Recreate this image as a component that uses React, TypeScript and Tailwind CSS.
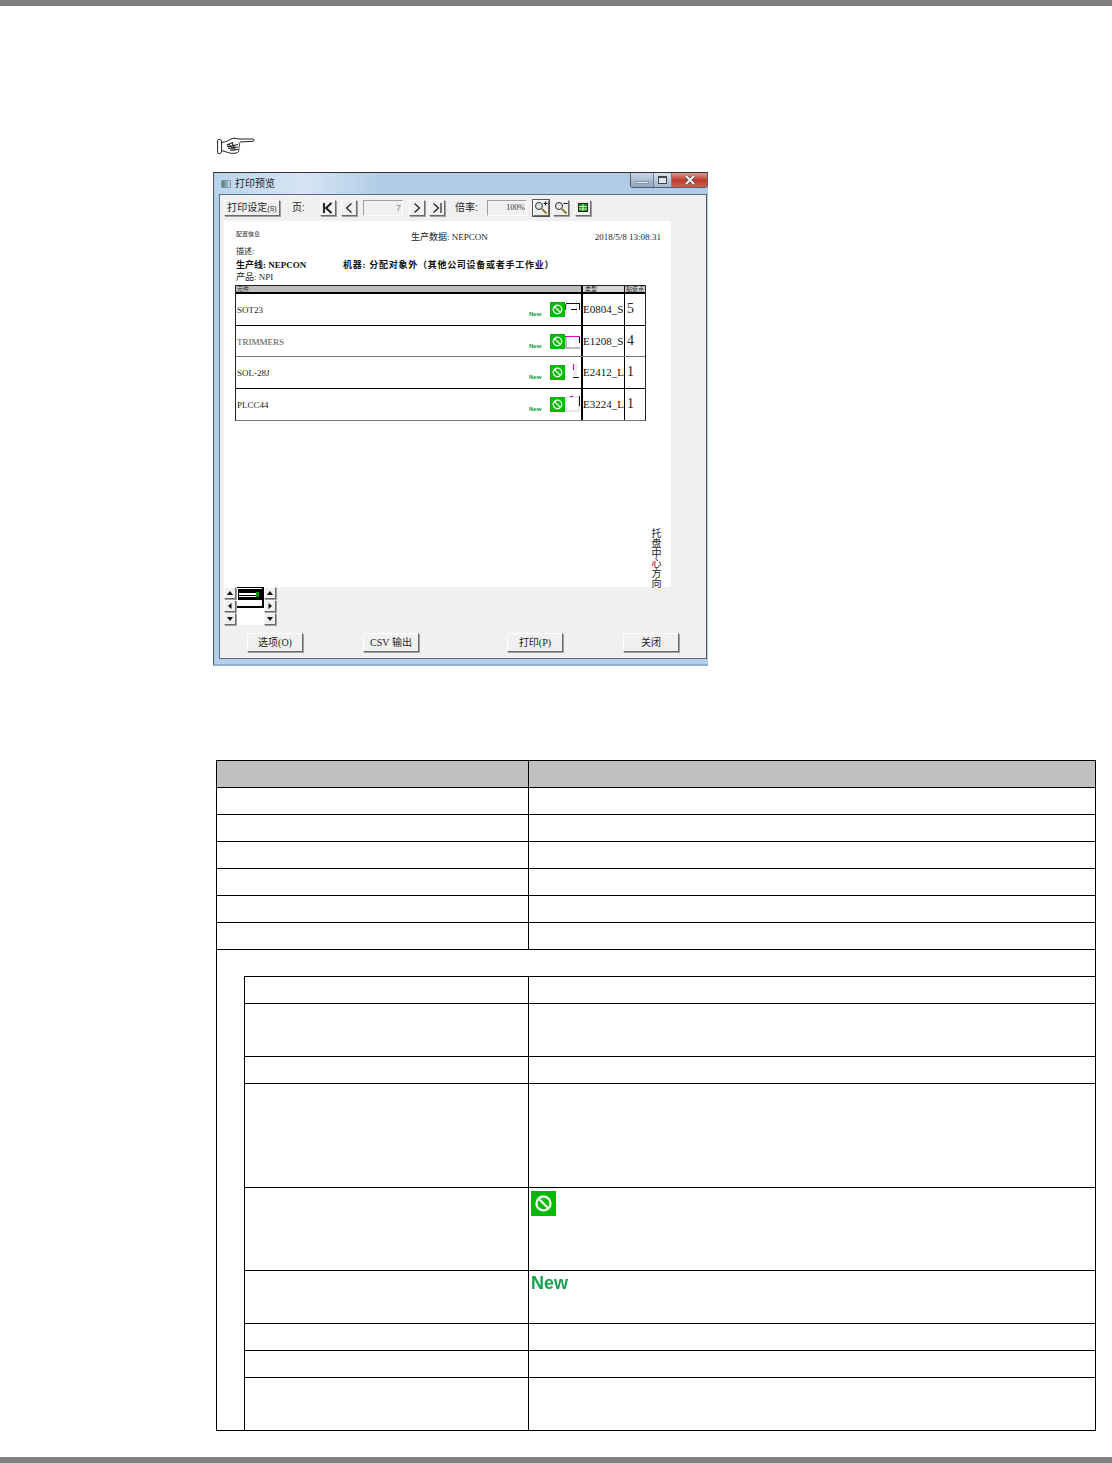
import React from "react";

const cjk = "font-['Liberation_Sans','Noto_Sans_CJK_SC',sans-serif]";
const serif = "font-['Liberation_Serif','Noto_Sans_CJK_SC',serif]";
const raised =
  "bg-[#f0f0f0] border border-t-white border-l-white border-r-[#6b6b6b] border-b-[#6b6b6b] shadow-[1px_1px_0_#a0a0a0]";

function Hand() {
  return (
    <svg width="38" height="19" viewBox="0 0 38 19" fill="none" stroke="#222" strokeWidth="1">
      <path d="M3 2.500C1 2 .6 3 .6 4v11c0 1.500 1 2 2.400 1.500C4.400 16 4.600 15 4.600 14V5c0-1.500-.4-2.300-1.600-2.500z" />
      <path d="M4.600 5.500C9 5 11 4 14 2c3-1.500 5-.5 8 0h14c1.500 0 1.600 2.200 0 2.300L23 5" />
      <path d="M4.600 13.500c3 .5 5 2 8 2.500 3 .5 6 .5 8-.5 1.500-1 1.500-2 .5-2.500 1.500-.5 1.500-2 .5-2.500 1-.5 1.500-2 .5-2.500 1-1 .5-2.500-.5-2.500" />
      <path d="M10 8c2-1.500 4-2 6-2.500M10 9c3 2 6-1 11-1.500M11 11c3 1 6-1 10-1M13 13c3 .5 5-.5 8-.5M12 7l4 5M15 6l3 6" strokeWidth="1.200" />
    </svg>
  );
}

function NavBtn({ d, thick }: { d: string; thick?: boolean }) {
  return (
    <div className={`w-[16px] h-[16px] flex items-center justify-center ${raised}`}>
      <svg width="12" height="12" viewBox="0 0 12 12" fill="none" stroke="#111" strokeWidth={thick ? 1.800 : 1.100}>
        <path d={d} />
      </svg>
    </div>
  );
}

function ZoomIcon({ sign }: { sign: "+" | "-" }) {
  return (
    <svg width="14" height="14" viewBox="0 0 14 14" fill="none">
      <circle cx="5" cy="5" r="3.500" stroke="#333" fill="#dfe8e0" />
      <path d="M8 8l4.500 4.500" stroke="#8a7a20" strokeWidth="1.800" />
      <path d={sign === "+" ? "M9.500 2.500h4M11.500 .5v4" : "M9.500 2.500h4"} stroke="#111" />
    </svg>
  );
}

function SmallBtn({ children, box }: { children: React.ReactNode; box?: boolean }) {
  return (
    <div
      className={`w-[16px] h-[16px] flex items-center justify-center ${raised} ${box ? "outline outline-1 outline-[#555]" : ""}`}
    >
      {children}
    </div>
  );
}

function DlgBtn({ children, ml }: { children: React.ReactNode; ml: string }) {
  return (
    <div
      className={`${ml} w-[56px] h-[19px] flex items-center justify-center text-[10px] leading-none text-[#222] ${serif} ${raised}`}
    >
      {children}
    </div>
  );
}

function Arrow({ dir }: { dir: "u" | "d" | "l" | "r" }) {
  const p = {
    u: "M1 6h6L4 2z",
    d: "M1 2h6L4 6z",
    l: "M5.500 1v6L2 4z",
    r: "M2.500 1v6L6 4z",
  }[dir];
  return (
    <div className={`w-[12px] h-[12px] flex items-center justify-center ${raised}`}>
      <svg width="8" height="8" viewBox="0 0 8 8">
        <path d={p} fill="#111" />
      </svg>
    </div>
  );
}

function Stop({ size }: { size: number }) {
  return (
    <svg width={size} height={size} viewBox="0 0 25 25" className="block">
      <rect width="25" height="25" fill="#00b900" />
      <circle cx="12.500" cy="12.500" r="7" fill="none" stroke="#e8f8e8" strokeWidth="2.400" />
      <path d="M7.500 7.500l10 10" stroke="#e8f8e8" strokeWidth="2.400" />
    </svg>
  );
}

const fragments: React.ReactNode[] = [
  <>
    <path d="M1.500 2v14M11.500 2v14" stroke="#e0e0ea" />
    <path d="M.5 6v6" stroke="#8a108a" />
    <path d="M1 5.500h13M6 11.500h6M14.500 5v7" stroke="#111" />
  </>,
  <>
    <path d="M1 7v11h14" stroke="#777" />
    <path d="M4 9v8M11 9v8" stroke="#e0e0ea" />
    <path d="M0 6.500h15" stroke="#d010c0" />
    <path d="M14.500 7v6" stroke="#111" />
  </>,
  <>
    <rect x="8.500" y="3" width="3.500" height="12" fill="#ebebf6" />
    <path d="M8.500 3v6" stroke="#d010c0" />
    <path d="M8 16.500h6" stroke="#111" />
  </>,
  <>
    <rect x="1" y="4" width="13" height="14" fill="#fff" stroke="#dedeec" strokeWidth="1.500" />
    <path d="M5 3.500h3" stroke="#d010c0" />
    <path d="M14.500 3v10" stroke="#111" />
  </>,
];

const rows = [
  { name: "SOT23", type: "E0804_S", n: "5", h: "h-[32px]", line: "border-black", text: "text-[#222]" },
  { name: "TRIMMERS", type: "E1208_S", n: "4", h: "h-[31px]", line: "border-[#777]", text: "text-[#555]" },
  { name: "SOL-28J", type: "E2412_L", n: "1", h: "h-[32px]", line: "border-black", text: "text-[#222]" },
  { name: "PLCC44", type: "E3224_L", n: "1", h: "h-[32px]", line: "border-[#777]", text: "text-[#222]" },
];

function PreviewRow({ r, i }: { r: (typeof rows)[number]; i: number }) {
  return (
    <div className={`flex ${r.h} border-b ${r.line}`}>
      <div className="w-[345px] flex pt-[8px] pl-[1px]">
        <div className={`text-[9px] leading-[16px] ${r.text}`}>{r.name}</div>
        <div className="ml-auto w-[12px] mt-[8px] text-[6px] leading-[8px] font-bold text-[#0a9a4a] font-['Liberation_Sans',sans-serif]">
          New
        </div>
        <div className="ml-[9px] h-[15px]">
          <Stop size={15} />
        </div>
        <svg width="16" height="20" viewBox="0 0 16 20" className="-mt-[4px] shrink-0" fill="none">
          {fragments[i]}
        </svg>
      </div>
      <div className="w-[43px] border-l-2 border-black text-[11px] leading-[16px] pt-[7px] text-[#111] whitespace-nowrap overflow-hidden">
        {r.type}
      </div>
      <div className="flex-1 border-l border-black pl-[2px] pt-[6px] text-[14px] leading-[18px] text-[#222]">{r.n}</div>
    </div>
  );
}

function Paper() {
  return (
    <div className={`ml-[4px] w-[447px] h-[366px] bg-white flex ${serif}`}>
      <div className="ml-[11px] w-[411px]">
        <div className="relative flex h-[22px] items-end text-[9px] leading-[12px] text-[#222]">
          <div className="absolute left-[1px] top-[10px] text-[6px] leading-[6px]">配置信息</div>
          <div className="ml-[176px] whitespace-nowrap">生产数据: NEPCON</div>
          <div className="ml-auto -mr-[15px] whitespace-nowrap">2018/5/8 13:08:31</div>
        </div>
        <div className="h-[14px] pl-[1px] pt-[3px] text-[8px] leading-[12px] text-[#222]">描述:</div>
        <div className="flex h-[14px] pl-[1px] pt-[2px] text-[9px] leading-[12px] font-bold text-[#111] whitespace-nowrap">
          <div className="w-[107px]">生产线: NEPCON</div>
          <div className="tracking-[0.74px]">机器: 分配对象外（其他公司设备或者手工作业）</div>
        </div>
        <div className="h-[14px] pl-[1px] text-[9px] leading-[12px] text-[#222]">产品: NPI</div>
        <div className="border border-[#222] border-b-0">
          <div className="flex h-[8px] bg-[#bdbdbd] border-b-2 border-black text-[6px] leading-[6px] text-[#222] font-['Noto_Sans_CJK_SC',sans-serif]">
            <div className="w-[345px] pl-[1px]">元件</div>
            <div className="w-[43px] pl-[2px] border-l-2 border-black bg-[#d6d6d6]">类型</div>
            <div className="flex-1 pl-[1px] border-l border-black bg-[#d6d6d6]">贴装点</div>
          </div>
          {rows.map((r, i) => (
            <PreviewRow key={r.name} r={r} i={i} />
          ))}
        </div>
      </div>
      <div className="self-end ml-[4px] mb-[1px] h-[58px] [writing-mode:vertical-rl] text-[10px] leading-[12px] text-[#222] font-['Noto_Sans_CJK_SC',sans-serif] whitespace-nowrap">
        托盘中心方向
      </div>
    </div>
  );
}

function MiniNav() {
  return (
    <div className="ml-[4px] flex h-[38px]">
      <div className="flex flex-col gap-[1px] w-[13px]">
        <Arrow dir="u" />
        <Arrow dir="l" />
        <Arrow dir="d" />
      </div>
      <div className="w-[27px] h-[38px] bg-white">
        <div className="h-[21px] border-t border-r-2 border-b-2 border-black flex flex-col pt-[1px] pl-[1px]">
          <div className="h-[11px] w-[24px] bg-black flex flex-col justify-center gap-[1px] relative">
            <div className="h-[2px] w-[17px] ml-[1px] bg-white" />
            <div className="h-[1px] w-[17px] ml-[1px] bg-white" />
            <div className="absolute right-[3px] top-[3px] w-[3px] h-[5px] bg-[#0a9a0a]" />
          </div>
        </div>
      </div>
      <div className="flex flex-col gap-[1px] w-[13px]">
        <Arrow dir="u" />
        <Arrow dir="r" />
        <Arrow dir="d" />
      </div>
    </div>
  );
}

function Client() {
  return (
    <div className="ml-[5px] mr-[1px] flex-1 bg-[#f0f0f0] border border-[#5f6d7c] border-r-[#4a5563]">
      <div className={`flex items-center h-[16px] mt-[5px] ml-[4px] text-[10px] leading-none text-[#222] ${cjk}`}>
        <div className={`w-[56px] h-[16px] flex items-center justify-center whitespace-nowrap ${raised}`}>
          打印设定<span className="text-[7px]">(S)</span>
        </div>
        <div className="ml-[12px] w-[28px]">页:</div>
        <NavBtn d="M2 1v10M9.500 1L4 6l5.500 5" thick />
        <div className="ml-[5px]">
          <NavBtn d="M8.500 1.500L3.500 6l5 4.500" />
        </div>
        <div className="ml-[6px] w-[40px] h-[16px] border border-[#a0a0a0] border-r-white border-b-white text-right pr-[1px] leading-[14px] text-[9px] text-[#888]">
          7
        </div>
        <div className="ml-[6px]">
          <NavBtn d="M3.500 1.500L8.500 6l-5 4.500" />
        </div>
        <div className="ml-[4px]">
          <NavBtn d="M2.500 1.500L7.500 6l-5 4.500M10 1v10" />
        </div>
        <div className="ml-[10px] w-[32px] whitespace-nowrap">倍率:</div>
        <div className="w-[40px] h-[16px] border border-[#a0a0a0] border-r-white border-b-white text-right pr-[1px] leading-[14px] text-[8px] text-[#333] font-['Liberation_Serif',serif]">
          100%
        </div>
        <div className="ml-[6px]">
          <SmallBtn box>
            <ZoomIcon sign="+" />
          </SmallBtn>
        </div>
        <div className="ml-[4px]">
          <SmallBtn>
            <ZoomIcon sign="-" />
          </SmallBtn>
        </div>
        <div className="ml-[6px]">
          <SmallBtn>
            <svg width="12" height="12" viewBox="0 0 12 12" fill="none">
              <rect x="1.500" y="1.500" width="9" height="8" fill="#0a9a0a" stroke="#222" />
              <path d="M2 4.500h8M2 7h8M6 2v7" stroke="#d8f0d0" />
            </svg>
          </SmallBtn>
        </div>
      </div>
      <div className="mt-[5px]">
        <Paper />
      </div>
      <MiniNav />
      <div className="flex mt-[8px]">
        <DlgBtn ml="ml-[27px]">选项(O)</DlgBtn>
        <DlgBtn ml="ml-[60px]">CSV 输出</DlgBtn>
        <DlgBtn ml="ml-[88px]">打印(P)</DlgBtn>
        <DlgBtn ml="ml-[60px]">关闭</DlgBtn>
      </div>
    </div>
  );
}

function Window() {
  return (
    <div className="ml-[213px] w-[495px] h-[494px] flex flex-col border-t border-[#333] border-l border-l-[#555] bg-[#b4cfea] border-b-2 border-b-[#8fb0d3]">
      <div className="h-[21px] flex bg-gradient-to-r from-[#b9d3ec] via-[#d6e5f4] via-[18%] to-[#afcbe6] to-[35%]">
        <div className="w-[10px] h-[8px] ml-[7px] mt-[7px] bg-gradient-to-r from-[#3e7f70] to-[#c8d8e8] border border-[#8a97a5]" />
        <div className={`ml-[4px] mt-[4px] text-[10px] leading-[14px] text-[#222] ${cjk}`}>打印预览</div>
        <div className="ml-auto flex h-[15px] border border-t-0 border-[#56606c] rounded-b-[3px] overflow-hidden">
          <div className="w-[23px] bg-gradient-to-b from-[#c9d8e8] to-[#8ea6be] flex items-end justify-center pb-[3px] border-r border-[#6f7f90]">
            <div className="w-[14px] h-[3px] bg-[#dfe8f1] border border-[#8597a9]" />
          </div>
          <div className="w-[18px] bg-gradient-to-b from-[#d3dfeb] to-[#a4b8cc] flex items-center justify-center border-r border-[#6f7f90]">
            <div className="w-[9px] h-[8px] border border-[#444] border-t-2 bg-[#dfe8f1]" />
          </div>
          <div className="w-[35px] bg-gradient-to-b from-[#d89a8f] via-[#bf3a2c] to-[#c9604f] flex items-center justify-center">
            <svg width="14" height="10" viewBox="0 0 14 10">
              <path d="M3 1l8 8M11 1l-8 8" stroke="#4a4a4a" strokeWidth="3.200" />
              <path d="M3 1l8 8M11 1l-8 8" stroke="#f4f4f4" strokeWidth="2" />
            </svg>
          </div>
        </div>
      </div>
      <Client />
      <div className="h-[5px]" />
    </div>
  );
}

function TopRow({ header }: { header?: boolean }) {
  return (
    <div className={`flex h-[27px] border-b border-black ${header ? "bg-[#c0c0c0]" : ""}`}>
      <div className="w-[312px] border-r border-black" />
      <div className="flex-1" />
    </div>
  );
}

function SubRow({ h, children, last }: { h: string; children?: React.ReactNode; last?: boolean }) {
  return (
    <div className={`flex ${h} ${last ? "" : "border-b border-black"}`}>
      <div className="w-[284px] border-r border-black" />
      <div className="flex-1">{children}</div>
    </div>
  );
}

export default function App() {
  return (
    <div className="w-[1112px] h-[1463px] bg-white flex flex-col overflow-hidden">
      <div className="h-[6px] bg-[#808080]" />
      <div className="ml-[217px] mt-[131px] h-[19px]">
        <Hand />
      </div>
      <div className="mt-[16px]">
        <Window />
      </div>
      <div className="ml-[216px] mt-[94px] w-[880px] border border-black">
        <TopRow header />
        <TopRow />
        <TopRow />
        <TopRow />
        <TopRow />
        <TopRow />
        <TopRow />
        <div className="pl-[27px] pt-[26px]">
          <div className="border-l border-t border-black">
            <SubRow h="h-[27px]" />
            <SubRow h="h-[53px]" />
            <SubRow h="h-[27px]" />
            <SubRow h="h-[104px]" />
            <SubRow h="h-[83px]">
              <div className="ml-[2px] mt-[3px]">
                <Stop size={25} />
              </div>
            </SubRow>
            <SubRow h="h-[53px]">
              <div className="ml-[2px] mt-[1px] text-[18px] leading-[22px] font-bold text-[#16a34a] font-['Liberation_Sans',sans-serif] blur-[0.4px]">
                New
              </div>
            </SubRow>
            <SubRow h="h-[27px]" />
            <SubRow h="h-[27px]" />
            <SubRow h="h-[52px]" last />
          </div>
        </div>
      </div>
      <div className="mt-auto h-[6px] bg-[#808080]" />
    </div>
  );
}
